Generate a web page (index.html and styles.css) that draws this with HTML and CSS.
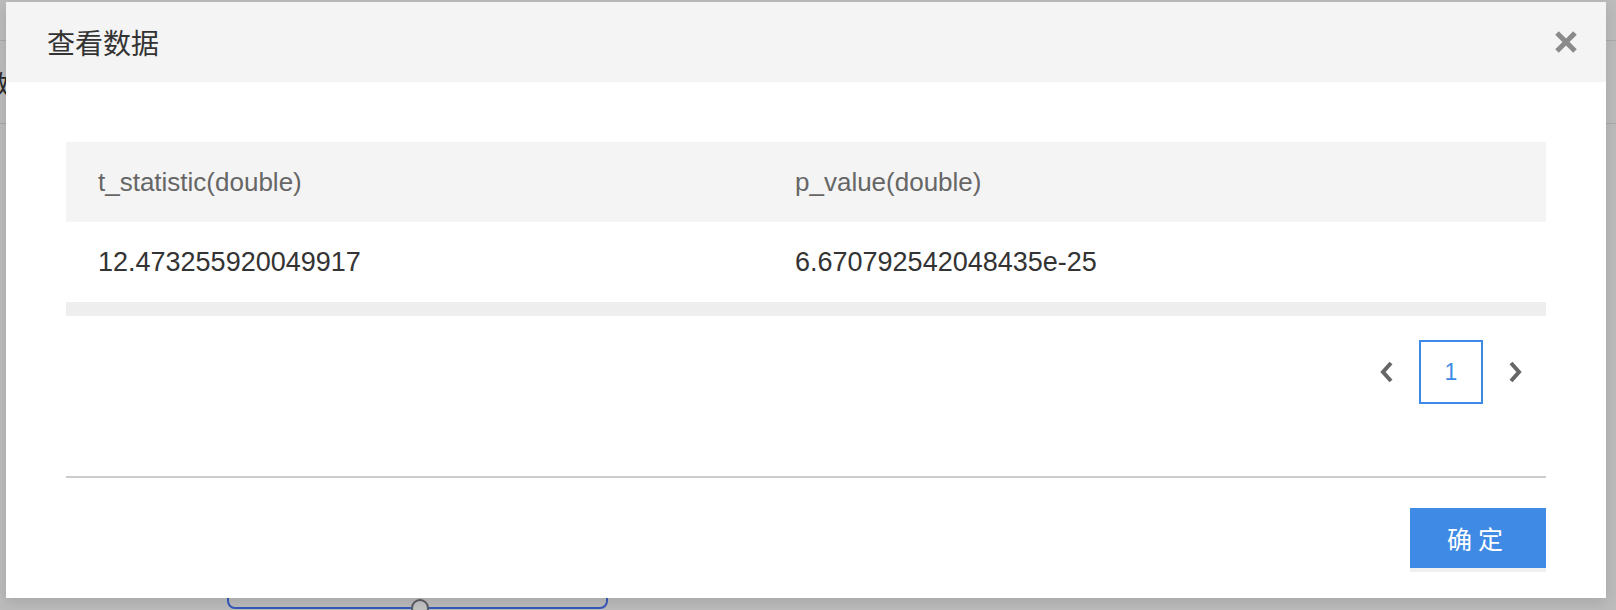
FILE: index.html
```html
<!DOCTYPE html>
<html lang="zh-CN">
<head>
    <meta charset="UTF-8">
    <meta name="viewport" content="width=device-width, initial-scale=1.0">
    <title>查看数据</title>
    <link rel="stylesheet" href="styles.css">
</head>
<body>

    <div class="page">
        <div class="page-top"></div>
        <div class="page-row"><span class="page-label">参数</span></div>
        <div class="page-node">
            <span class="node-port"></span>
        </div>
    </div>

    <div class="modal">
        <div class="modal-header">
            <h3 class="modal-title">查看数据</h3>
            <button class="modal-close" title="关闭">
                <svg width="24" height="24" viewBox="0 0 24 24">
                    <path d="M3 3 L21 21 M21 3 L3 21" stroke="#8a8a8a" stroke-width="5" fill="none"/>
                </svg>
            </button>
        </div>

        <div class="modal-body">
            <div class="table-wrap">
                <table class="data-table">
                    <thead>
                        <tr>
                            <th class="col-first">t_statistic(double)</th>
                            <th>p_value(double)</th>
                        </tr>
                    </thead>
                    <tbody>
                        <tr>
                            <td>12.473255920049917</td>
                            <td>6.670792542048435e-25</td>
                        </tr>
                    </tbody>
                </table>
                <div class="scroll-bar"></div>
            </div>

            <div class="pager">
                <button class="pager-arrow">
                    <svg width="14" height="22" viewBox="0 0 14 22">
                        <polyline points="11,2 3,11 11,20" stroke="#666" stroke-width="4" fill="none"/>
                    </svg>
                </button>
                <span class="pager-item active">1</span>
                <button class="pager-arrow">
                    <svg width="14" height="22" viewBox="0 0 14 22">
                        <polyline points="3,2 11,11 3,20" stroke="#666" stroke-width="4" fill="none"/>
                    </svg>
                </button>
            </div>
        </div>

        <div class="modal-footer">
            <button class="btn-ok">确定</button>
        </div>
    </div>

</body>
</html>
```

FILE: styles.css
```css
* {
    box-sizing: border-box;
}

body {
    margin: 0;
    height: 610px;
    overflow: hidden;
    background-color: #bcbcbc;
    font-family: "Liberation Sans", "Noto Sans CJK SC", sans-serif;
    color: #333;
}

/* page under the mask */
.page {
    height: 610px;
    display: flex;
    flex-direction: column;
}

.page-top {
    height: 41px;
    border-bottom: 1px solid #a9a9a9;
}

.page-row {
    height: 83px;
    border-bottom: 1px solid #a9a9a9;
    display: flex;
    align-items: center;
}

.page-label {
    margin-left: -42px;
    font-size: 26px;
    color: #2a2a2a;
}

.page-node {
    margin-top: auto;
    margin-left: 227px;
    width: 381px;
    height: 50px;
    margin-bottom: 1px;
    border: 2px solid #3559bd;
    border-radius: 8px;
    position: relative;
}

.node-port {
    position: absolute;
    left: 182px;
    bottom: -10px;
    width: 18px;
    height: 18px;
    border-radius: 50%;
    border: 2px solid #5c5c64;
    background-color: #c4c4c4;
}

/* modal */
.modal {
    position: absolute;
    top: 2px;
    left: 6px;
    width: 1600px;
    background-color: #fff;
    box-shadow: 0 4px 14px rgba(0, 0, 0, 0.12);
}

.modal-header {
    height: 80px;
    background-color: #f4f4f4;
    display: flex;
    align-items: center;
    justify-content: space-between;
    padding: 0 28px 0 41px;
}

.modal-title {
    margin: 0;
    font-size: 28px;
    font-weight: normal;
    color: #333;
    font-family: "Noto Sans CJK SC", sans-serif;
}

.modal-close {
    border: none;
    background: none;
    padding: 0;
    width: 24px;
    height: 24px;
    display: flex;
    cursor: pointer;
}

.modal-body {
    padding: 60px 60px 0;
}

.data-table {
    width: 100%;
    border-collapse: collapse;
    table-layout: fixed;
}

.data-table th,
.data-table td {
    height: 80px;
    padding: 0 32px;
    text-align: left;
    white-space: nowrap;
}

.data-table th {
    background-color: #f4f4f4;
    font-weight: normal;
    font-size: 26px;
    color: #666;
}

.data-table td {
    font-size: 27px;
    color: #333;
}

.col-first {
    width: 697px;
}

.scroll-bar {
    height: 14px;
    background-color: #eeeeee;
}

.pager {
    margin-top: 24px;
    padding-right: 24px;
    display: flex;
    justify-content: flex-end;
    align-items: center;
    gap: 25px;
}

.pager-arrow {
    border: none;
    background: none;
    padding: 0;
    width: 14px;
    height: 22px;
    display: flex;
    cursor: pointer;
}

.pager-item {
    width: 64px;
    height: 64px;
    border: 2px solid #3d8ae6;
    color: #3d8ae6;
    font-size: 23px;
    display: flex;
    align-items: center;
    justify-content: center;
}

.modal-footer {
    margin: 72px 60px 0;
    border-top: 2px solid #cccccc;
    padding: 30px 0;
    display: flex;
    justify-content: flex-end;
}

.btn-ok {
    width: 136px;
    height: 60px;
    border: none;
    background-color: #3f8ae4;
    color: #fff;
    font-size: 25px;
    letter-spacing: 6px;
    padding-left: 6px;
    font-family: "Noto Sans CJK SC", sans-serif;
    box-shadow: 0 4px 0 #f0f0f0;
    cursor: pointer;
}
```
